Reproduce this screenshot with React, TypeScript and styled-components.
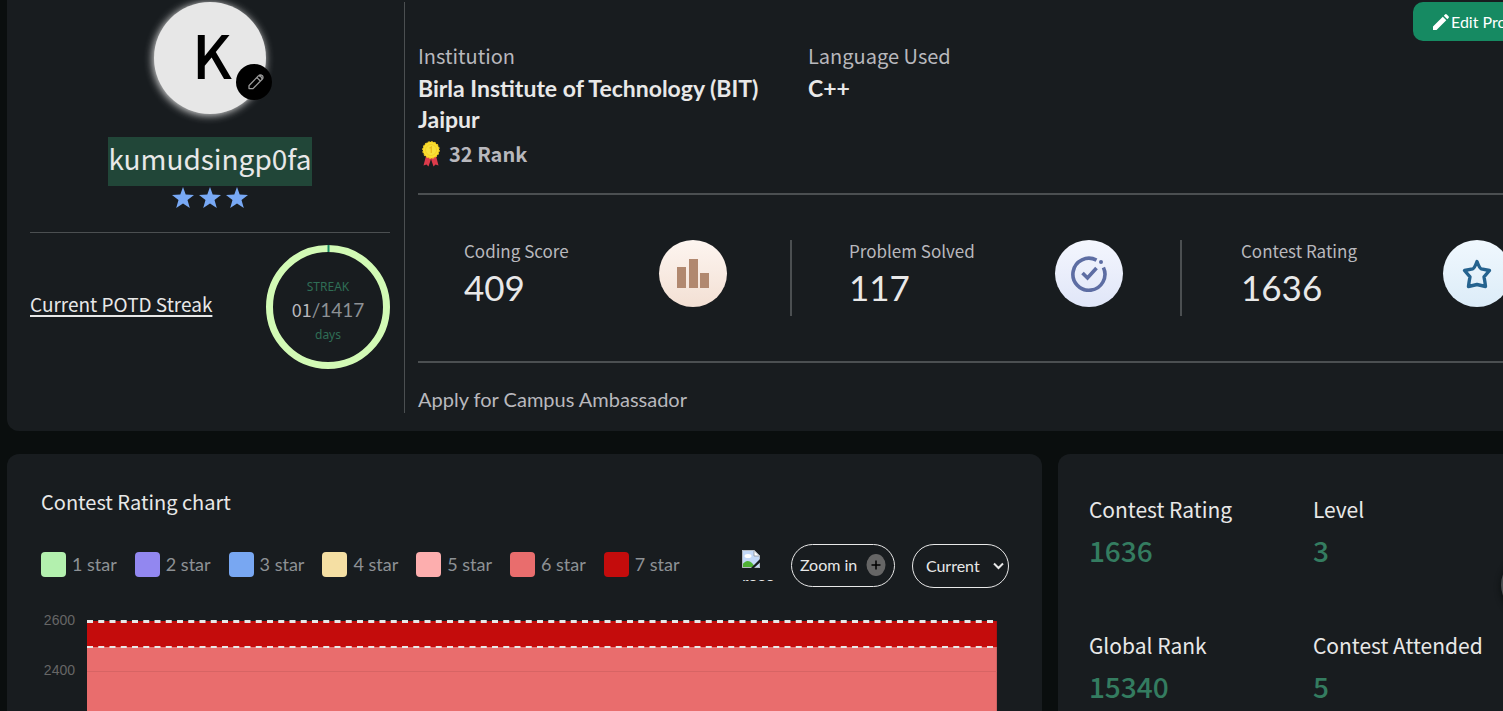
import React from "react";
import styled, { createGlobalStyle } from "styled-components";

const sans = `"Noto Sans CJK SC", "Noto Sans", sans-serif`;
const round = `Lato, "Open Sans", sans-serif`;

const GlobalStyle = createGlobalStyle`
  *, *::before, *::after { box-sizing: border-box; }
  body { margin: 0; background: #0a0e0e; color: #e8e8e8; font-family: ${sans}; }
  button, select { font: inherit; color: inherit; }
  h1, h2, p, dl, dd, ul { margin: 0; padding: 0; font-weight: 400; }
`;

const Viewport = styled.div`
  height: 100vh;
  overflow: hidden;
`;

const Page = styled.main`
  width: calc(100% + 95px);
  padding: 0 7px;
  display: flex;
  flex-direction: column;
  gap: 23px;
`;

/* profile card */

const ProfileCard = styled.section`
  display: flex;
  background: #181c1f;
  border-radius: 0 0 12px 12px;
  padding: 2px 21px 18px 23px;
`;

const Identity = styled.div`
  flex: none;
  width: 375px;
  padding-right: 14px;
  border-right: 1px solid #4b4f51;
  display: flex;
  flex-direction: column;
  align-items: center;
`;

const Avatar = styled.div`
  position: relative;
  width: 112px;
  height: 112px;
  border-radius: 50%;
  background: #e7e7e7;
  box-shadow: -1px 1px 9px #e8e8e8;
  color: #000;
  font-size: 60px;
  font-weight: 500;
  line-height: 102px;
  text-align: center;
  padding-left: 4px;
`;

const AvatarEdit = styled.button`
  position: absolute;
  right: -6px;
  bottom: 14px;
  width: 36px;
  height: 36px;
  padding: 0 0 0 3px;
  border: 0;
  border-radius: 50%;
  background: #000;
  color: #9a9a9a;
  display: grid;
  place-items: center;
`;

const UserName = styled.h1`
  margin-top: 23px;
  background: #214638;
  font-size: 28px;
  line-height: 42px;
  padding-bottom: 7px;
`;

const Stars = styled.div`
  display: flex;
  gap: 5px;
  padding: 1px 0 24px;
  color: #78a9f5;
`;

const StreakRow = styled.div`
  width: 100%;
  border-top: 1px solid #4b4f51;
  padding-top: 12px;
  display: flex;
  align-items: center;
  justify-content: space-between;
`;

const StreakLink = styled.a`
  padding-bottom: 6px;
  color: #e8e8e8;
  font-size: 19px;
  line-height: 28px;
  text-decoration: underline;
  text-decoration-thickness: 2px;
  text-underline-offset: 3px;
`;

const Ring = styled.div`
  position: relative;
  width: 124px;
  height: 124px;
`;

const RingText = styled.div`
  position: absolute;
  inset: 0;
  display: flex;
  flex-direction: column;
  align-items: center;
  justify-content: center;
  padding-top: 8px;
  font-family: "Noto Sans", sans-serif;
  color: #2f6d55;
  font-size: 12px;
  line-height: 24px;
`;

const RingCount = styled.div`
  color: #8d9195;
  font-family: ${round};
  font-size: 19px;
  line-height: 22px;
  padding-bottom: 2px;
  b { font-family: ${sans}; font-weight: 400; font-size: 18px; line-height: 18px; color: #b8b8bd; }
`;

const Details = styled.div`
  flex: 1;
  min-width: 0;
  padding-left: 13px;
`;

const Facts = styled.dl`
  display: flex;
  height: 191px;
`;

const Fact = styled.div`
  width: 390px;
  padding: 38px 40px 0 0;
  dt { color: #b8b8bd; font-size: 20px; line-height: 32px; }
`;

const FactValue = styled.dd`
  padding-top: 1px;
  font-family: ${round};
  font-weight: 700;
  font-size: 23px;
  line-height: 31px;
`;

const Rank = styled.dd`
  display: flex;
  align-items: center;
  gap: 8px;
  padding: 3px 0 0 3px;
  color: #b8b8bd;
  font-size: 20px;
  font-weight: 600;
  line-height: 32px;
`;

const EditButton = styled.button`
  margin-left: auto;
  width: 157px;
  height: 39px;
  padding: 0 20px;
  border: 0;
  border-radius: 10px;
  background: #168a62;
  color: #fff;
  font-family: ${round};
  font-size: 16px;
  display: flex;
  align-items: center;
  gap: 2px;
`;

const Stats = styled.div`
  display: grid;
  grid-template-columns: 62fr 65fr 65fr;
  border: solid #4b4f51;
  border-width: 2px 0;
  padding: 45px 0;
`;

const Stat = styled.div`
  display: flex;
  align-items: flex-start;
  justify-content: space-between;
  height: 76px;
  padding: 0 57px;
  &:first-child { padding: 0 63px 0 46px; }
  &:last-child { padding: 0 59px; }
  & + & { border-left: 2px solid #4b4f51; }
`;

const StatLabel = styled.p`
  color: #b8b8bd;
  font-size: 17px;
  line-height: 22px;
`;

const StatValue = styled.p`
  font-family: ${round};
  font-size: 35px;
  line-height: 50px;
`;

const StatIcon = styled.span<{ $from: string; $to: string }>`
  width: 68px;
  height: 67px;
  border-radius: 50%;
  background: linear-gradient(${(p) => p.$from}, ${(p) => p.$to});
  display: grid;
  place-items: center;
`;

const Ambassador = styled.a`
  display: block;
  padding-top: 22px;
  color: #b8b8bd;
  font-family: ${round};
  font-size: 20px;
  line-height: 28px;
  text-decoration: none;
`;

/* lower cards */

const Lower = styled.div`
  display: grid;
  grid-template-columns: 66fr 34fr;
  gap: 16px;
`;

const Card = styled.section`
  position: relative;
  min-width: 0;
  background: #181c1f;
  border-radius: 12px;
  padding: 33px 33px 34px 34px;
`;

const CardTitle = styled.h2`
  font-size: 20px;
  line-height: 30px;
`;

const Toolbar = styled.div`
  display: flex;
  align-items: flex-start;
  margin-top: 27px;
`;

const Legend = styled.ul`
  flex: 1;
  display: flex;
  gap: 18px;
  padding-top: 8px;
  list-style: none;
`;

const LegendItem = styled.li<{ $color: string }>`
  display: flex;
  align-items: center;
  gap: 6px;
  color: #8d9195;
  font-family: ${round};
  font-size: 18px;
  line-height: 25px;
  &::before {
    content: "";
    width: 25px;
    height: 25px;
    border-radius: 4px;
    background: ${(p) => p.$color};
  }
`;

const ResetButton = styled.button`
  width: 32px;
  height: 31px;
  margin: 6px 17px 0 0;
  padding: 0;
  border: 0;
  background: none;
  overflow: hidden;
  text-align: left;
  font-family: ${round};
  font-size: 18px;
  line-height: 22px;
  display: flex;
  flex-direction: column;
  justify-content: flex-start;
  svg { flex: none; margin-bottom: 3px; }
`;

const ZoomButton = styled.button`
  width: 104px;
  height: 43px;
  margin-right: 17px;
  padding: 0 8px 2px;
  border: 1px solid #e8e8e8;
  border-radius: 22px;
  background: none;
  font-family: ${round};
  font-size: 16px;
  display: flex;
  align-items: center;
  justify-content: space-between;
`;

const SelectWrap = styled.label`
  position: relative;
  svg { position: absolute; right: 5px; top: 17px; pointer-events: none; }
`;

const RangeSelect = styled.select`
  display: block;
  width: 97px;
  height: 44px;
  padding: 0 13px 2px;
  appearance: none;
  border: 1px solid #e8e8e8;
  border-radius: 22px;
  background: #181c1f;
  font-family: ${round};
  font-size: 16px;
`;

const Chart = styled.div`
  display: flex;
  margin: 24px 12px 0 0;
`;

const Axis = styled.div`
  flex: none;
  width: 46px;
  padding-right: 12px;
  color: #666;
  font-family: "Liberation Sans", sans-serif;
  font-size: 14px;
  line-height: 50px;
  text-align: right;
  margin-top: -17px;
`;

const Plot = styled.svg`
  flex: 1;
  min-width: 0;
  height: 480px;
`;

const Summary = styled.dl`
  display: grid;
  grid-template-columns: 224px 1fr;
  row-gap: 54px;
  padding-top: 6px;
  margin-left: -3px;
  dt { font-size: 21px; line-height: 33px; }
  dd { color: #347c60; font-size: 28px; font-weight: 500; line-height: 49px; }
`;

const NextButton = styled.button`
  position: absolute;
  left: 443px;
  top: 101px;
  width: 60px;
  height: 60px;
  border: 0;
  border-radius: 50%;
  background: #4b4f51;
  box-shadow: 0 2px 6px #0a0e0e;
`;

const legend: [string, string][] = [
  ["1 star", "#b3f0ae"],
  ["2 star", "#9287f0"],
  ["3 star", "#78a7f2"],
  ["4 star", "#f5dfa3"],
  ["5 star", "#fdaeae"],
  ["6 star", "#e96d6d"],
  ["7 star", "#c40c0c"],
];

const summary = [
  ["Contest Rating", "1636"],
  ["Level", "3"],
  ["Global Rank", "15340"],
  ["Contest Attended", "5"],
];

const ticks = [2600, 2400, 2200, 2000, 1800, 1600, 1400, 1200, 1000];

const PencilOutline = () => (
  <svg width="20" height="20" viewBox="0 0 20 20" fill="none" stroke="currentColor" strokeWidth="1.3" strokeLinejoin="round">
    <path d="M3.600 13 12.600 3.600a2.400 2.400 0 0 1 3.600 0 2.400 2.400 0 0 1 0 3.600L7 16.600H3V13.600Z M10.800 5.400l3.800 3.800M13 3.800q2.600.2 2.800 3" />
  </svg>
);

const StarShape = () => (
  <svg width="22" height="21" viewBox="0 0 22 21" fill="currentColor">
    <path d="M11 0l2.700 7.600 8.300.3-6.500 5.100L17.800 21 11 16.400 4.200 21l2.300-8L0 7.900l8.300-.3z" />
  </svg>
);

const Medal = () => (
  <svg width="20" height="26" viewBox="0 0 20 26">
    <path d="M5 15 2.500 24.500l3-1 2 2L10 18l2.500 7.500 2-2 3 1L15 15z" fill="#dd3b4b" />
    <circle cx="10" cy="9" r="8.200" fill="#fbdf2d" stroke="#f2cb22" strokeWidth="1.200" strokeDasharray="2 1.200" />
    <circle cx="10" cy="9" r="5.500" fill="#f8e13a" stroke="#f0c92a" strokeWidth=".8" />
    <path d="M8.500 7.200 10.300 6v6" fill="none" stroke="#e9b91c" strokeWidth="1.300" />
  </svg>
);

const BarsIcon = () => (
  <svg width="32" height="29" viewBox="0 0 32 29" fill="#b1886f">
    <path d="M0 8h9v21H0zM12 0h9v29h-9zM23 14h9v15h-9z" />
  </svg>
);

const CheckIcon = () => (
  <svg width="36" height="36" viewBox="0 0 36 36" fill="none" stroke="#5d6da3" strokeWidth="3.600">
    <path d="M25.500 4.200A16 16 0 1 0 32.400 11.500" />
    <path d="M11.500 17l5 5 9-10" />
    <circle cx="30" cy="6" r="2" fill="#5d6da3" stroke="none" />
  </svg>
);

const StarIcon = () => (
  <svg width="30" height="30" viewBox="0 0 30 30" fill="none" stroke="#25638f" strokeWidth="3.400" strokeLinejoin="round">
    <path d="M15 2.500Q17.500 9.300 19.300 9.800L27.500 11.500 22 17.800Q23 23 23.500 27.500L15 25.500 6.500 27.500Q7 23 8 17.800L2.500 11.500 10.700 9.800Q12.500 9.300 15 2.500Z" />
  </svg>
);

const PencilSolid = () => (
  <svg width="16" height="16" viewBox="0 0 16 16" fill="#fff">
    <path d="M0 16v-3.500L9.800 2.700l3.500 3.500L3.500 16zM10.800 1.700 12 .5q.9-.9 1.800 0l1.700 1.700q.9.900 0 1.800l-1.200 1.200z" />
  </svg>
);

const BrokenImage = () => (
  <svg width="18" height="18" viewBox="0 0 18 18">
    <path d="M0 0h12l6 6v12H0z" fill="#c3d9f8" />
    <path d="M0 18v-3q5-7 10-2l4 5z" fill="#4fb135" />
    <ellipse cx="6" cy="6" rx="3.500" ry="2" fill="#fff" />
    <path d="M12 0v6h6z" fill="#fff" stroke="#8a9098" strokeWidth=".8" />
    <path d="M.5.500h11.500l5.500 5.500v11.500H.5z" fill="none" stroke="#b4bac2" />
    <path d="M18 9v3.500L12 18H9z" fill="#181c1f" />
  </svg>
);

export default function App() {
  return (
    <Viewport>
      <GlobalStyle />
      <Page>
        <ProfileCard>
          <Identity>
            <Avatar>
              K
              <AvatarEdit aria-label="Change photo"><PencilOutline /></AvatarEdit>
            </Avatar>
            <UserName>kumudsingp0fa</UserName>
            <Stars><StarShape /><StarShape /><StarShape /></Stars>
            <StreakRow>
              <StreakLink href="#potd">Current POTD Streak</StreakLink>
              <Ring>
                <svg width="124" height="124" viewBox="0 0 124 124" fill="none" strokeWidth="7">
                  <circle cx="62" cy="62" r="58.500" stroke="#d2fab5" />
                  <path d="M62.500 0v7" stroke="#158a63" strokeWidth="2" />
                </svg>
                <RingText>
                  <div>STREAK</div>
                  <RingCount><b>01</b>/1417</RingCount>
                  <div>days</div>
                </RingText>
              </Ring>
            </StreakRow>
          </Identity>
          <Details>
            <Facts>
              <Fact>
                <dt>Institution</dt>
                <FactValue>Birla Institute of Technology (BIT) Jaipur</FactValue>
                <Rank><Medal />32 Rank</Rank>
              </Fact>
              <Fact>
                <dt>Language Used</dt>
                <FactValue>C++</FactValue>
              </Fact>
              <EditButton><PencilSolid />Edit Profile</EditButton>
            </Facts>
            <Stats>
              <Stat>
                <div><StatLabel>Coding Score</StatLabel><StatValue>409</StatValue></div>
                <StatIcon $from="#fdf5f0" $to="#f3e0d4"><BarsIcon /></StatIcon>
              </Stat>
              <Stat>
                <div><StatLabel>Problem Solved</StatLabel><StatValue>117</StatValue></div>
                <StatIcon $from="#f4f6fe" $to="#e0e6f8"><CheckIcon /></StatIcon>
              </Stat>
              <Stat>
                <div><StatLabel>Contest Rating</StatLabel><StatValue>1636</StatValue></div>
                <StatIcon $from="#f0f8fe" $to="#dcecf8"><StarIcon /></StatIcon>
              </Stat>
            </Stats>
            <Ambassador href="#ambassador">Apply for Campus Ambassador</Ambassador>
          </Details>
        </ProfileCard>
        <Lower>
          <Card>
            <CardTitle>Contest Rating chart</CardTitle>
            <Toolbar>
              <Legend>
                {legend.map(([name, color]) => <LegendItem key={name} $color={color}>{name}</LegendItem>)}
              </Legend>
              <ResetButton><BrokenImage />reset</ResetButton>
              <ZoomButton>
                Zoom in
                <svg width="20" height="22" viewBox="0 0 20 22">
                  <ellipse cx="10" cy="11" rx="9.500" ry="11" fill="#666" />
                  <path d="M5.500 11h9M10 6.500v9" stroke="#000" strokeWidth="1.500" />
                </svg>
              </ZoomButton>
              <SelectWrap>
                <RangeSelect aria-label="Rating range" defaultValue="Current"><option>Current</option></RangeSelect>
                <svg width="11" height="10" viewBox="0 0 11 10" fill="none" stroke="#e8e8e8" strokeWidth="2">
                  <path d="M1 2.500l4.500 4.500L10 2.500" />
                </svg>
              </SelectWrap>
            </Toolbar>
            <Chart>
              <Axis>{ticks.map((t) => <div key={t}>{t}</div>)}</Axis>
              <Plot>
                <rect y="9" width="100%" height="26" fill="#c40c0c" />
                <rect y="35" width="100%" height="445" fill="#e96d6d" />
                {ticks.slice(1).map((t, i) => (
                  <rect key={t} y={59 + i * 50} width="100%" height="1" fill="#d76464" />
                ))}
                <line x1="0" x2="100%" y1="9.500" y2="9.500" stroke="#e8e8e8" strokeWidth="3" strokeDasharray="6 5.250" />
                <line x1="0" x2="100%" y1="35" y2="35" stroke="#e8e8e8" strokeWidth="2" strokeDasharray="6 5.250" />
              </Plot>
            </Chart>
          </Card>
          <Card>
            <Summary>
              {summary.map(([name, value]) => (
                <div key={name}><dt>{name}</dt><dd>{value}</dd></div>
              ))}
            </Summary>
            <NextButton aria-label="Next" />
          </Card>
        </Lower>
      </Page>
    </Viewport>
  );
}
